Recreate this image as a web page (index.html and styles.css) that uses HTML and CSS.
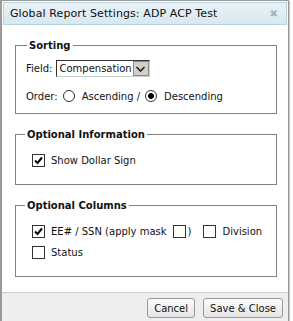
FILE: index.html
```html
<!DOCTYPE html>
<html>
<head>
<meta charset="utf-8">
<link rel="stylesheet" href="styles.css">
</head>
<body>
<div class="dialog">
	<div class="titlebar">
		<span class="title">Global Report Settings: ADP ACP Test</span>
		<span class="close">&#x2716;</span>
	</div>
	<div class="content">
		<fieldset class="sorting">
			<legend>Sorting</legend>
			<div class="row">
				<label>Field:</label>
				<span class="select"><span class="value">Compensation</span><span class="arrow"><svg width="11" height="8" viewBox="0 0 11 8"><path d="M1.5 2 L5.5 6 L9.5 2" fill="none" stroke="#222" stroke-width="1.6"/></svg></span></span>
			</div>
			<div class="row order">
				<label>Order:</label>
				<input type="radio" name="order" class="radio" id="asc"><label for="asc">Ascending /</label>
				<input type="radio" name="order" class="radio" id="desc" checked><label for="desc">Descending</label>
			</div>
		</fieldset>
		<fieldset>
			<legend>Optional Information</legend>
			<div class="row">
				<input type="checkbox" class="check" id="dollar" checked><label for="dollar">Show Dollar Sign</label>
			</div>
		</fieldset>
		<fieldset>
			<legend>Optional Columns</legend>
			<div class="row">
				<input type="checkbox" class="check" id="ssn" checked><label for="ssn">EE# / SSN (apply mask</label>
				<input type="checkbox" class="check mask" id="mask"><label for="mask">)</label>
				<input type="checkbox" class="check" id="division"><label for="division">Division</label>
			</div>
			<div class="row">
				<input type="checkbox" class="check" id="status"><label for="status">Status</label>
			</div>
		</fieldset>
	</div>
	<div class="footer">
		<button>Cancel</button>
		<button>Save &amp; Close</button>
	</div>
</div>
</body>
</html>
```
FILE: styles.css
```css
body
{
	margin: 0;
	background: #fff;
	font-family: "DejaVu Sans", Verdana, sans-serif;
	font-size: 10px;
	color: #111;
}
.dialog
{
	width: 286px;
	border: 1px solid #9a9a9a;
	border-left-width: 2px;
	background: #fff;
	box-shadow: 1px 1px 1px #c8c8c8;
}
.titlebar
{
	display: flex;
	align-items: center;
	justify-content: space-between;
	height: 21px;
	margin: 1px;
	padding: 0 8px 0 6px;
	background: linear-gradient(#e8f2f7, #d7e8f0);
	border: 1px solid #b8d3df;
}
.title
{
	font-size: 11px;
	letter-spacing: 0.1px;
	color: #111;
}
.close
{
	font-size: 10px;
	color: #a8b4b8;
}
.content
{
	padding: 13px 11px 15px 13px;
}
fieldset
{
	margin: 0 0 14px 0;
	padding: 9px 0 13px 8px;
	border: 1px solid #808080;
}
fieldset:last-child
{
	margin-bottom: 0;
}
fieldset.sorting
{
	padding: 6px 0 7px 10px;
}
legend
{
	padding: 0 2px;
	margin-left: 1px;
	font-weight: bold;
	line-height: 13px;
}
.row
{
	display: flex;
	align-items: center;
	height: 21px;
}
.row label
{
	margin-right: 4px;
}
.select
{
	display: inline-flex;
	align-items: center;
	height: 15px;
	border: 1px solid #333;
	border-right-color: #ccc;
	border-bottom-color: #ccc;
	background: #fff;
}
.value
{
	padding: 0 1px 0 2px;
}
.arrow
{
	display: flex;
	align-items: center;
	justify-content: center;
	width: 14px;
	height: 13px;
	background: #d4d0c8;
	border: 1px solid #888;
}
.order
{
	height: 20px;
	margin-top: 7px;
}
.radio
{
	appearance: none;
	width: 12px;
	height: 12px;
	margin: 0 7px 0 1px;
	border: 1px solid #333;
	border-radius: 50%;
	background: #fff;
}
.radio:checked
{
	background: radial-gradient(circle, #000 2.6px, #fff 3.2px);
}
.check
{
	appearance: none;
	width: 13px;
	height: 13px;
	margin: 0 6px 0 8px;
	border: 1px solid #333;
	background: #fff;
}
.check:checked
{
	background: #fff url("data:image/svg+xml,%3Csvg xmlns='http://www.w3.org/2000/svg' width='11' height='11'%3E%3Cpath d='M2 5.5 L4.5 8 L9 2.5' fill='none' stroke='%23000' stroke-width='2'/%3E%3C/svg%3E") center no-repeat;
}
.check.mask
{
	margin: 0 2px 0 2px;
}
.footer
{
	display: flex;
	justify-content: flex-end;
	gap: 8px;
	padding: 5px 5px 6px 0;
	background: #eee;
	border-top: 1px solid #ccc;
}
button
{
	height: 20px;
	padding: 0 6px;
	font-family: inherit;
	font-size: 10px;
	color: #111;
	border: 1px solid #999;
	border-radius: 3px;
	background: linear-gradient(#fdfdfd, #e4e4e4);
}
```
